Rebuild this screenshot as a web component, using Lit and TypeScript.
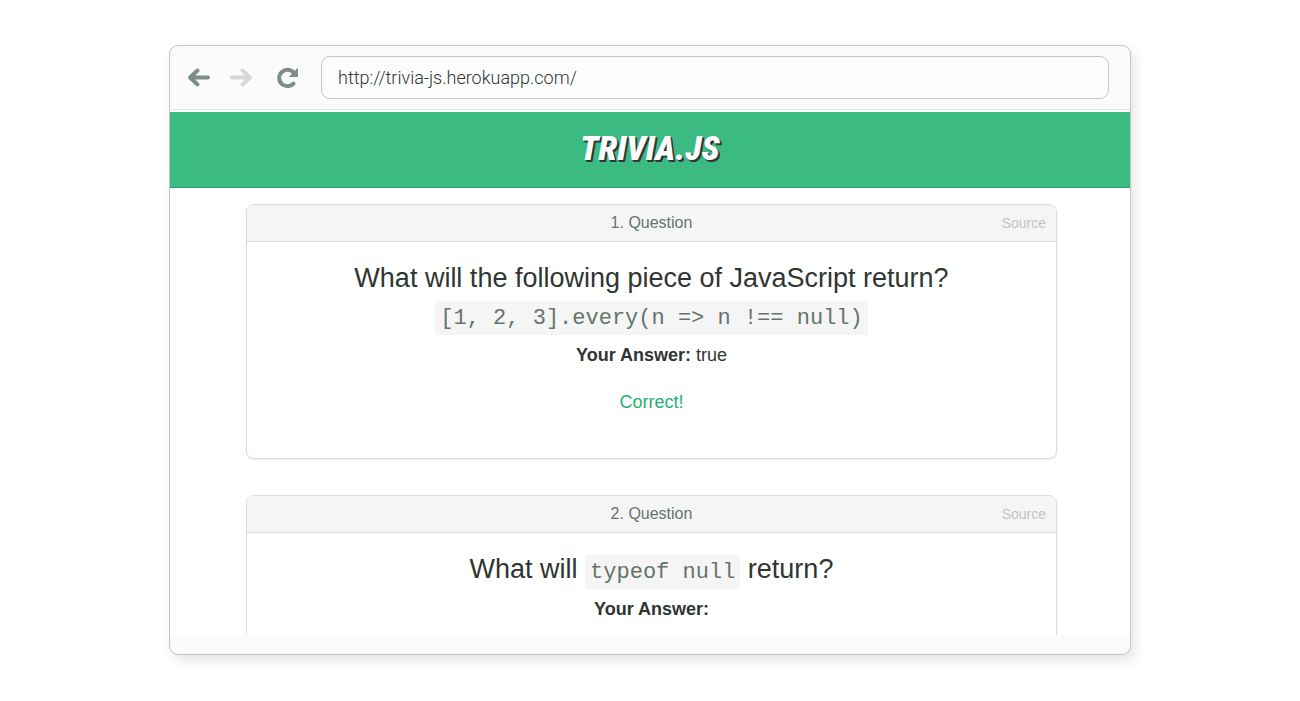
import { LitElement, html, css, svg, TemplateResult } from "lit";
import { customElement, property, state } from "lit/decorators.js";

@customElement("trivia-card")
class TriviaCard extends LitElement {
  @property({ type: Number }) number = 1;

  static styles = css`
    :host {
      display: block;
      border: 1px solid #dcdcdc;
      border-radius: 8px;
      box-shadow: 0 1px 2px rgba(0, 0, 0, 0.08);
      background: #fff;
      overflow: hidden;
    }
    .head {
      display: grid;
      grid-template-columns: 1fr auto 1fr;
      align-items: baseline;
      padding: 0 10px;
      border-bottom: 1px solid #dcdcdc;
      background: #f5f5f5;
      line-height: 36px;
    }
    .label {
      grid-column: 2;
      margin: 0;
      color: #66736d;
      font-size: 16px;
      font-weight: 400;
    }
    .source {
      justify-self: end;
      color: #c4c4c4;
      font-size: 14px;
      text-decoration: none;
    }
    .body {
      min-height: 198px;
      padding: 18px 16px 0;
      text-align: center;
    }
  `;

  render() {
    return html`
      <div class="head">
        <h2 class="label">${this.number}. Question</h2>
        <a class="source" href="#">Source</a>
      </div>
      <div class="body"><slot></slot></div>
    `;
  }
}

interface Question {
  prompt: TemplateResult;
  answer: string;
  result: string;
}

const questions: Question[] = [
  {
    prompt: html`What will the following piece of JavaScript return?<br /><code class="code">[1, 2, 3].every(n =&gt; n !== null)</code>`,
    answer: "true",
    result: "Correct!",
  },
  {
    prompt: html`What will <code class="code">typeof null</code> return?`,
    answer: "",
    result: "",
  },
];

const backIcon = svg`<path d="M21 11.500H3.500M10.500 4.500L3 11.500l7.500 7" />`;
const forwardIcon = svg`<path d="M3 11.500h17.500M13.500 4.500L21 11.500l-7.500 7" />`;

@customElement("app-root")
class AppRoot extends LitElement {
  @state() private url = "http://trivia-js.herokuapp.com/";

  static styles = css`
    :host {
      display: flex;
      box-sizing: border-box;
      height: 100vh;
      padding: 45px 13% 46px;
      background: #fff;
      color: #2f3532;
      font-family: "Liberation Sans", Arial, sans-serif;
    }
    .window {
      flex: 1;
      min-width: 0;
      display: flex;
      flex-direction: column;
      border: 1px solid #c4c4c4;
      border-radius: 9px;
      background: #fbfbfb;
      box-shadow: 4px 6px 12px rgba(0, 0, 0, 0.1);
      overflow: hidden;
    }
    .toolbar {
      display: flex;
      align-items: center;
      gap: 18px;
      padding: 10px 21px 10px 17px;
      border-bottom: 1px solid #e4e4e4;
    }
    .nav {
      display: flex;
      padding: 0;
      border: 0;
      background: none;
      color: #7b8f86;
    }
    .nav:disabled {
      color: #d8d8d8;
    }
    .reload {
      margin: 0 4px;
    }
    .icon {
      width: 24px;
      height: 24px;
      fill: none;
      stroke: currentColor;
      stroke-width: 4;
      stroke-linecap: round;
      stroke-linejoin: round;
    }
    .arc {
      stroke-width: 4;
    }
    .tip {
      fill: currentColor;
      stroke-width: 1;
    }
    .address {
      flex: 1;
      min-width: 0;
      box-sizing: border-box;
      height: 43px;
      padding: 0 16px;
      border: 1px solid #c6c6c6;
      border-radius: 9px;
      background: #fdfdfd;
      color: #2f3532;
      font-family: Roboto, sans-serif;
      font-size: 18px;
      font-weight: 300;
    }
    .page {
      flex: 1;
      min-height: 0;
      margin-bottom: 19px;
      padding-top: 2px;
      background: #fff;
      overflow: hidden;
    }
    .banner {
      display: flex;
      justify-content: center;
      height: 75px;
      padding-top: 16px;
      box-sizing: border-box;
      border-bottom: 1px solid #1eaa6c;
      background: #3bba82;
      height: 76px;
    }
    .title {
      margin: 0;
      color: #fff;
      font-family: "Roboto Condensed", Lato, sans-serif;
      font-size: 34px;
      font-style: italic;
      font-weight: 900;
      line-height: 40px;
      text-shadow: 1px 1px 0 #2f3532, 2px 2px 0 #2f3532;
    }
    .cards {
      display: flex;
      flex-direction: column;
      gap: 36px;
      padding: 16px 73px 0 76px;
    }
    .prompt {
      margin: 0;
      font-size: 27px;
      font-weight: 400;
      line-height: 37px;
    }
    .code {
      padding: 5px 5px 4px;
      background: #f5f5f5;
      color: #66736d;
      font-family: "Liberation Mono", monospace;
      font-size: 22px;
    }
    .text {
      margin: 0;
      font-size: 18px;
      line-height: 36px;
    }
    .result {
      margin: 11px 0 0;
      color: #1eb173;
      font-size: 18px;
      line-height: 36px;
    }
  `;

  render() {
    return html`
      <div class="window">
        <div class="toolbar">
          <button class="nav" aria-label="Back"><svg class="icon" viewBox="0 0 24 24">${backIcon}</svg></button>
          <button class="nav" aria-label="Forward" disabled><svg class="icon" viewBox="0 0 24 24">${forwardIcon}</svg></button>
          <button class="nav reload" aria-label="Reload">
            <svg class="icon" viewBox="0 0 24 24">
              <path class="arc" d="M18.500 17.500A8.200 8.200 0 1 1 18.500 6.500" />
              <path class="tip" d="M22.500 3v7.500h-7.500z" />
            </svg>
          </button>
          <input
            class="address"
            type="text"
            aria-label="Address"
            .value=${this.url}
            @input=${(e: Event) => (this.url = (e.target as HTMLInputElement).value)}
          />
        </div>
        <main class="page">
          <header class="banner"><h1 class="title">TRIVIA.JS</h1></header>
          <div class="cards">
            ${questions.map(
              (q, i) => html`
                <trivia-card .number=${i + 1}>
                  <h3 class="prompt">${q.prompt}</h3>
                  <p class="text"><strong>Your Answer:</strong> ${q.answer}</p>
                  ${q.result ? html`<p class="result">${q.result}</p>` : ""}
                </trivia-card>
              `
            )}
          </div>
        </main>
      </div>
    `;
  }
}
